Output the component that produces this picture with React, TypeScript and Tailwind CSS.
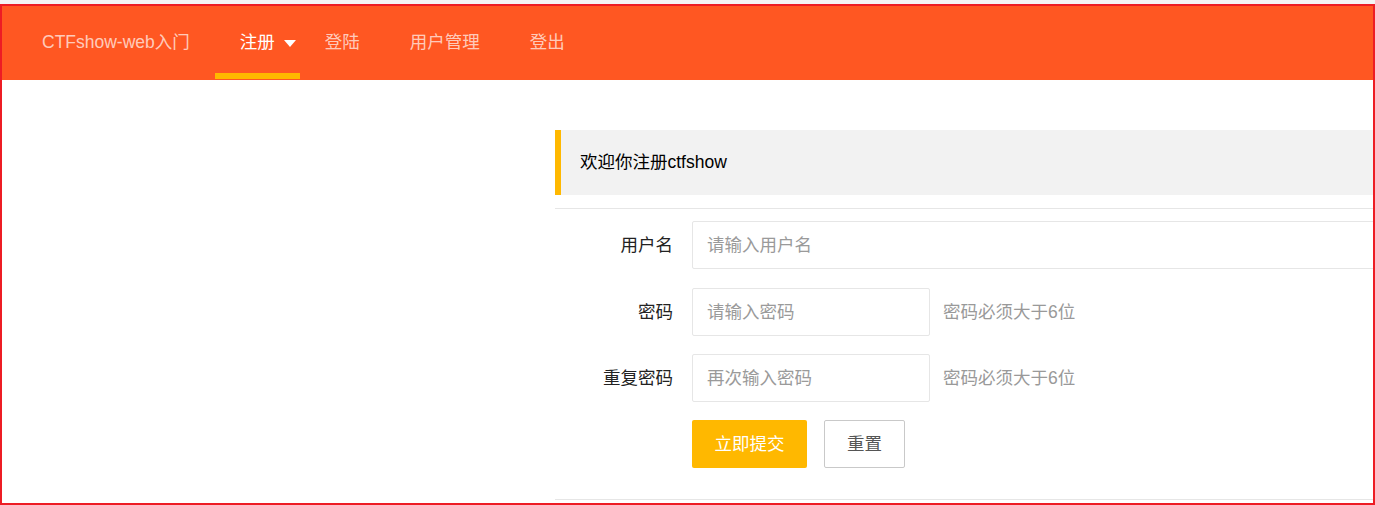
import React from "react";

const font = { fontFamily: '"Liberation Sans", "Noto Sans CJK SC", sans-serif' };

function NavItem({ label, active = false, caret = false }: { label: string; active?: boolean; caret?: boolean }) {
  return (
    <div className={`relative flex h-full items-center pl-[25px] ${caret ? "pr-[4px]" : "pr-[25px]"}`}>
      <span className={active ? "text-white" : "text-white/70"}>{label}</span>
      {caret && (
        <span className="ml-[9px] mt-[2px] h-0 w-0 border-x-[6.5px] border-t-[7px] border-x-transparent border-t-white" />
      )}
      {active && <span className="absolute bottom-0 left-0 right-0 h-[6px] bg-[#FFB800]" />}
    </div>
  );
}

function Row({ label, placeholder, hint, wide = false }: { label: string; placeholder: string; hint?: string; wide?: boolean }) {
  return (
    <div className={`flex items-center ${wide ? "mb-[1px]" : ""}`}>
      <label className="w-[137px] pr-[19px] text-right text-[17.5px] text-[#222]">{label}</label>
      <input
        placeholder={placeholder}
        className={`h-[48px] rounded-[2px] border border-[#e6e6e6] bg-white px-[14px] text-[17.5px] outline-none placeholder:text-[#9a9a9a] ${
          wide ? "flex-1" : "w-[238px]"
        }`}
        style={font}
      />
      {hint && <span className="ml-[13px] text-[17.5px] text-[#999]">{hint}</span>}
    </div>
  );
}

export default function App() {
  return (
    <div className="h-[505px] w-[1375px] overflow-hidden bg-[#f4f4f4]" style={font}>
      <div className="h-[4px]" />
      <div className="h-[501px] overflow-hidden border-2 border-[#ed1c24] bg-white">
        {/* Top nav */}
        <div className="flex h-[74px] items-center bg-[#FF5722] pb-[1px] text-[17.5px]">
          <div className="pl-[40px] pr-[25px] text-white/70">CTFshow-web入门</div>
          <NavItem label="注册" active caret />
          <NavItem label="登陆" />
          <NavItem label="用户管理" />
          <NavItem label="登出" />
        </div>

        {/* Form */}
        <div className="ml-[553px] mt-[50px] w-[1000px]">
          <div className="flex h-[65px] items-center border-l-[6px] border-[#FFB800] bg-[#f2f2f2] pl-[19px] text-[17.5px] text-black">
            欢迎你注册ctfshow
          </div>
          <div className="mt-[13px] h-px bg-[#e6e6e6]" />
          <div className="mt-[12px] flex flex-col gap-[18px]">
            <Row label="用户名" placeholder="请输入用户名" wide />
            <Row label="密码" placeholder="请输入密码" hint="密码必须大于6位" />
            <Row label="重复密码" placeholder="再次输入密码" hint="密码必须大于6位" />
            <div className="flex items-center pl-[137px]">
              <button className="h-[48px] rounded-[2px] bg-[#FFB800] px-[22.5px] text-[17.5px] text-white">立即提交</button>
              <button className="ml-[17px] h-[48px] rounded-[2px] border border-[#c9c9c9] bg-white px-[22px] text-[17.5px] text-[#555]">
                重置
              </button>
            </div>
          </div>
          <div className="mt-[31px] h-px bg-[#e6e6e6]" />
        </div>
      </div>
    </div>
  );
}
